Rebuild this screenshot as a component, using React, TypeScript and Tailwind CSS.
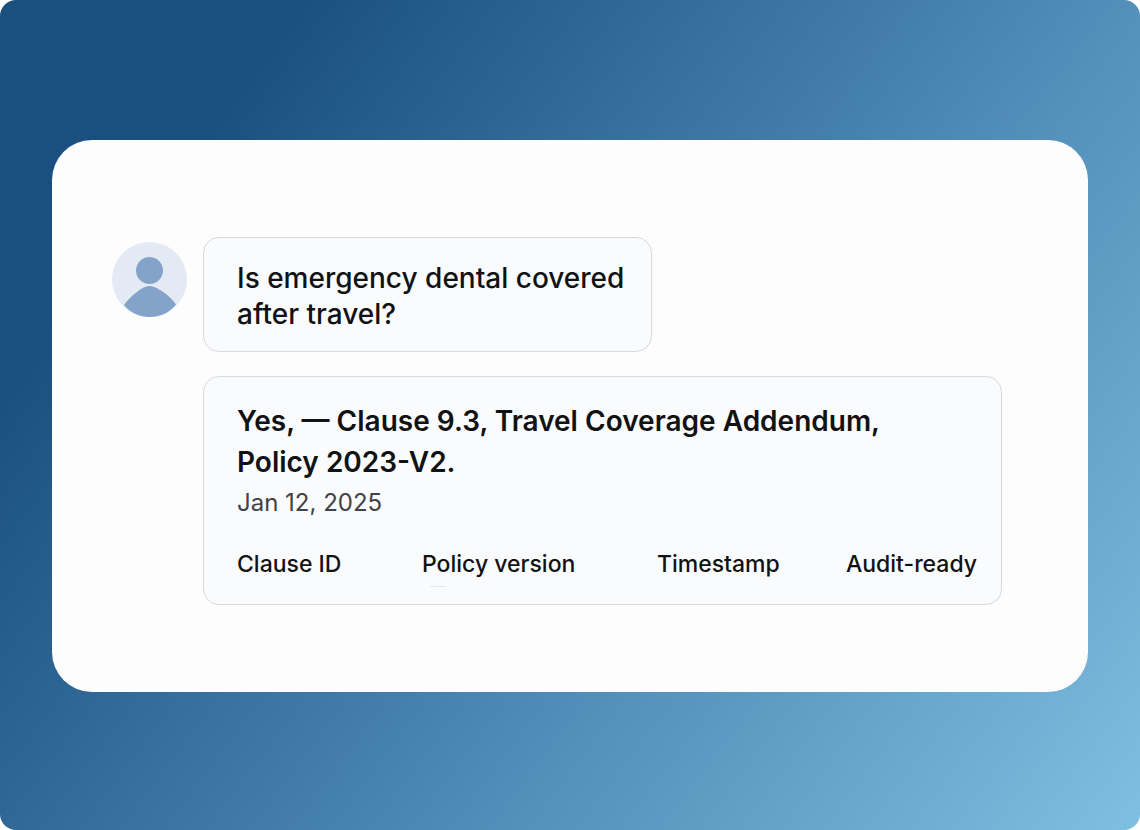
import type { ReactNode } from 'react'

const details = [
  { id: 'clause', label: 'Clause ID' },
  { id: 'policy', label: 'Policy version', marked: true },
  { id: 'time', label: 'Timestamp' },
  { id: 'audit', label: 'Audit-ready' },
]

function Avatar() {
  return (
    <svg className="w-[75px] h-[75px] shrink-0 mt-[5px]" viewBox="0 0 75 75" role="img" aria-label="User">
      <circle cx="37.5" cy="37.5" r="37.5" fill="#e3eaf4" />
      <circle cx="37.5" cy="28.5" r="13.5" fill="#83a3cb" />
      <path
        d="M12 63 C17 56 26 48 33 45 Q37.5 43 42 45 C50 48 59 55 64 62.5 C57 71 48 75 38 75 C27 75 18 70.5 12 63 Z"
        fill="#83a3cb"
      />
    </svg>
  )
}

function Bubble({ className, children }: { className: string; children: ReactNode }) {
  return (
    <div className={`border border-[#d7d9dd] rounded-2xl bg-[#fafbfc] pl-[33px] pr-6 ${className}`}>
      {children}
    </div>
  )
}

export default function App() {
  return (
    <div className="min-h-screen bg-white font-['Inter',sans-serif] text-[#111214]">
      <main className="min-h-screen flex items-center justify-center px-[52px] pt-[42px] pb-10 rounded-2xl bg-[linear-gradient(127deg,#19507f_0%,#19507f_17%,#4b87b3_58%,#7fbfe0_100%)]">
        <section className="w-full rounded-[40px] bg-[#fdfdfd] pl-[60px] pr-[86px] pt-[97px] pb-[87px]">
          <div className="flex items-start gap-4">
            <Avatar />
            <div className="flex-1 flex flex-col items-start gap-6">
              <Bubble className="max-w-[449px] pt-[22px] pb-[19px]">
                <p className="text-[28px] leading-9 font-medium">
                  Is emergency dental covered after travel?
                </p>
              </Bubble>

              <Bubble className="w-full pt-6 pb-[17px]">
                <h1 className="pr-9 text-[28px] leading-[41px] font-semibold">
                  Yes, — Clause 9.3, Travel Coverage Addendum, Policy 2023-V2.
                </h1>
                <p className="text-2xl leading-10 text-[#3f4247]">Jan 12, 2025</p>
                <ul className="grid grid-cols-[185fr_235fr_189fr_131fr] mt-[23px] text-[23px] leading-9 font-medium whitespace-nowrap">
                  {details.map(d => (
                    <li key={d.id}>
                      {d.label}
                      {d.marked && <span className="block w-4 h-px mt-1 ml-2 bg-[#e6e8ea]" />}
                    </li>
                  ))}
                </ul>
              </Bubble>
            </div>
          </div>
        </section>
      </main>
    </div>
  )
}
